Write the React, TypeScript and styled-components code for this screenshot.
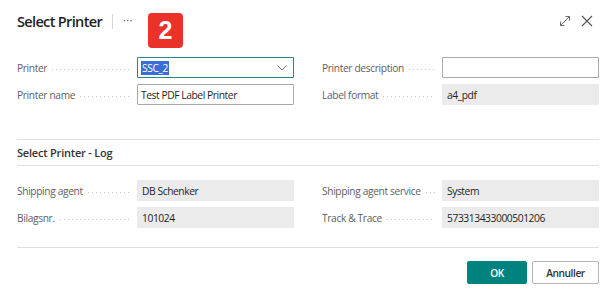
import React from "react";
import styled, { createGlobalStyle } from "styled-components";

const Global = createGlobalStyle`
  html, body { margin: 0; padding: 0; background: #ffffff; }
  body { font-family: "Open Sans", "Noto Sans", Arial, sans-serif; color: #212121; }
  * { box-sizing: border-box; }
`;

const Dialog = styled.div`
  position: relative;
  width: 614px;
  height: 298px;
  padding: 0 15px 0 17px;
  display: flex;
  flex-direction: column;
  background: #fff;
  overflow: hidden;
`;

const Header = styled.div`
  height: 40px;
  display: flex;
  align-items: center;
  padding-top: 2px;
`;

const Title = styled.h1`
  margin: 0;
  font-size: 14.6px;
  font-weight: 600;
  letter-spacing: -0.7px;
  color: #1f1f1f;
`;

const Divider = styled.span`
  width: 1px;
  height: 15px;
  background: #d6d6d6;
  margin: 0 10px 0 10px;
`;

const More = styled.span`
  font-size: 11px;
  color: #555;
  letter-spacing: 0.3px;
  line-height: 1;
  margin-top: -3px;
`;

const HeaderTools = styled.div`
  margin-left: auto;
  display: flex;
  align-items: center;
  gap: 10px;
  margin-right: 6px;
`;

const Badge = styled.div`
  position: absolute;
  left: 148px;
  top: 13px;
  width: 35px;
  height: 35px;
  border-radius: 4px;
  background: #e8322a;
  color: #fff;
  font-family: "Liberation Sans", Arial, sans-serif;
  font-weight: 700;
  font-size: 25px;
  display: flex;
  align-items: center;
  justify-content: center;
`;

const Grid = styled.div<{ $top: number }>`
  display: grid;
  grid-template-columns: 277px 277px;
  column-gap: 28px;
  row-gap: 6px;
  margin-top: ${(p) => p.$top}px;
`;

const Field = styled.div`
  display: flex;
  align-items: center;
  height: 21px;
`;

const Label = styled.div`
  width: 120px;
  flex: none;
  display: flex;
  align-items: center;
  font-size: 10.2px;
  letter-spacing: -0.35px;
  color: #606060;
  white-space: nowrap;
  padding-right: 7px;
`;

const Leader = styled.span`
  flex: 1;
  height: 1px;
  margin: 3px 0 0 5px;
  background-image: linear-gradient(to right, #c8c8c8 1px, transparent 1px);
  background-size: 4px 1px;
  background-repeat: repeat-x;
`;

const Input = styled.div<{ $focus?: boolean }>`
  flex: 1;
  height: 21px;
  display: flex;
  align-items: center;
  padding: 0 3px;
  font-size: 10.3px;
  letter-spacing: -0.45px;
  color: #1f1f1f;
  background: #fff;
  border: 1px solid ${(p) => (p.$focus ? "#1f8a88" : "#a8a8a8")};
  border-radius: 1px;
`;

const ReadOnly = styled.div`
  flex: 1;
  height: 21px;
  display: flex;
  align-items: center;
  padding: 0 5px;
  font-size: 10.3px;
  letter-spacing: -0.45px;
  color: #1f1f1f;
  background: #ebebeb;
`;

const Selected = styled.span`
  background: #3a6dd6;
  color: #fff;
  padding: 0 1px;
  line-height: 14px;
`;

const Chevron = styled.svg`
  margin-left: auto;
  margin-right: 3px;
`;

const Rule = styled.div<{ $top: number }>`
  height: 1px;
  background: #e0e0e0;
  margin-top: ${(p) => p.$top}px;
`;

const SectionTitle = styled.div`
  height: 26px;
  display: flex;
  align-items: center;
  font-size: 11px;
  font-weight: 600;
  letter-spacing: -0.2px;
  color: #333;
  border-bottom: 1px solid #e0e0e0;
`;

const Footer = styled.div`
  display: flex;
  justify-content: flex-end;
  gap: 5px;
  margin-top: 13px;
`;

const Button = styled.button<{ $primary?: boolean }>`
  height: 23px;
  min-width: ${(p) => (p.$primary ? "60px" : "67px")};
  padding: 0 8px;
  font-family: "Open Sans", "Noto Sans", Arial, sans-serif;
  font-size: 10.2px;
  font-weight: 600;
  letter-spacing: -0.45px;
  border-radius: 2px;
  cursor: pointer;
  color: ${(p) => (p.$primary ? "#fff" : "#333")};
  background: ${(p) => (p.$primary ? "#00827f" : "#fff")};
  border: 1px solid ${(p) => (p.$primary ? "#00827f" : "#b5b5b5")};
`;

const Row = ({ label, children }: { label: string; children: React.ReactNode }) => (
  <Field>
    <Label>
      {label}
      <Leader />
    </Label>
    {children}
  </Field>
);

export default function App() {
  return (
    <>
      <Global />
      <Dialog>
        <Header>
          <Title>Select Printer</Title>
          <Divider />
          <More>···</More>
          <HeaderTools>
            <svg width="12" height="12" viewBox="0 0 12 12" fill="none" stroke="#6a6a6a" strokeWidth="1">
              <path d="M1.5 10.5 L10.5 1.5" />
              <path d="M6.5 1.5 H10.5 V5.5" />
              <path d="M1.5 6.5 V10.5 H5.5" />
            </svg>
            <svg width="12" height="12" viewBox="0 0 12 12" fill="none" stroke="#555" strokeWidth="1.1">
              <path d="M1 1 L11 11 M11 1 L1 11" />
            </svg>
          </HeaderTools>
        </Header>
        <Badge>2</Badge>

        <Grid $top={17}>
          <Row label="Printer">
            <Input $focus>
              <Selected>SSC_2</Selected>
              <Chevron width="10" height="6" viewBox="0 0 10 6" fill="none" stroke="#777" strokeWidth="1">
                <path d="M0.5 0.5 L5 5 L9.5 0.5" />
              </Chevron>
            </Input>
          </Row>
          <Row label="Printer description">
            <Input />
          </Row>
          <Row label="Printer name">
            <Input>Test PDF Label Printer</Input>
          </Row>
          <Row label="Label format">
            <ReadOnly>a4_pdf</ReadOnly>
          </Row>
        </Grid>

        <Rule $top={34} />
        <SectionTitle>Select Printer - Log</SectionTitle>

        <Grid $top={14}>
          <Row label="Shipping agent">
            <ReadOnly>DB Schenker</ReadOnly>
          </Row>
          <Row label="Shipping agent service">
            <ReadOnly>System</ReadOnly>
          </Row>
          <Row label="Bilagsnr.">
            <ReadOnly>101024</ReadOnly>
          </Row>
          <Row label="Track &amp; Trace">
            <ReadOnly>573313433000501206</ReadOnly>
          </Row>
        </Grid>

        <Rule $top={19} />
        <Footer>
          <Button $primary>OK</Button>
          <Button>Annuller</Button>
        </Footer>
      </Dialog>
    </>
  );
}
